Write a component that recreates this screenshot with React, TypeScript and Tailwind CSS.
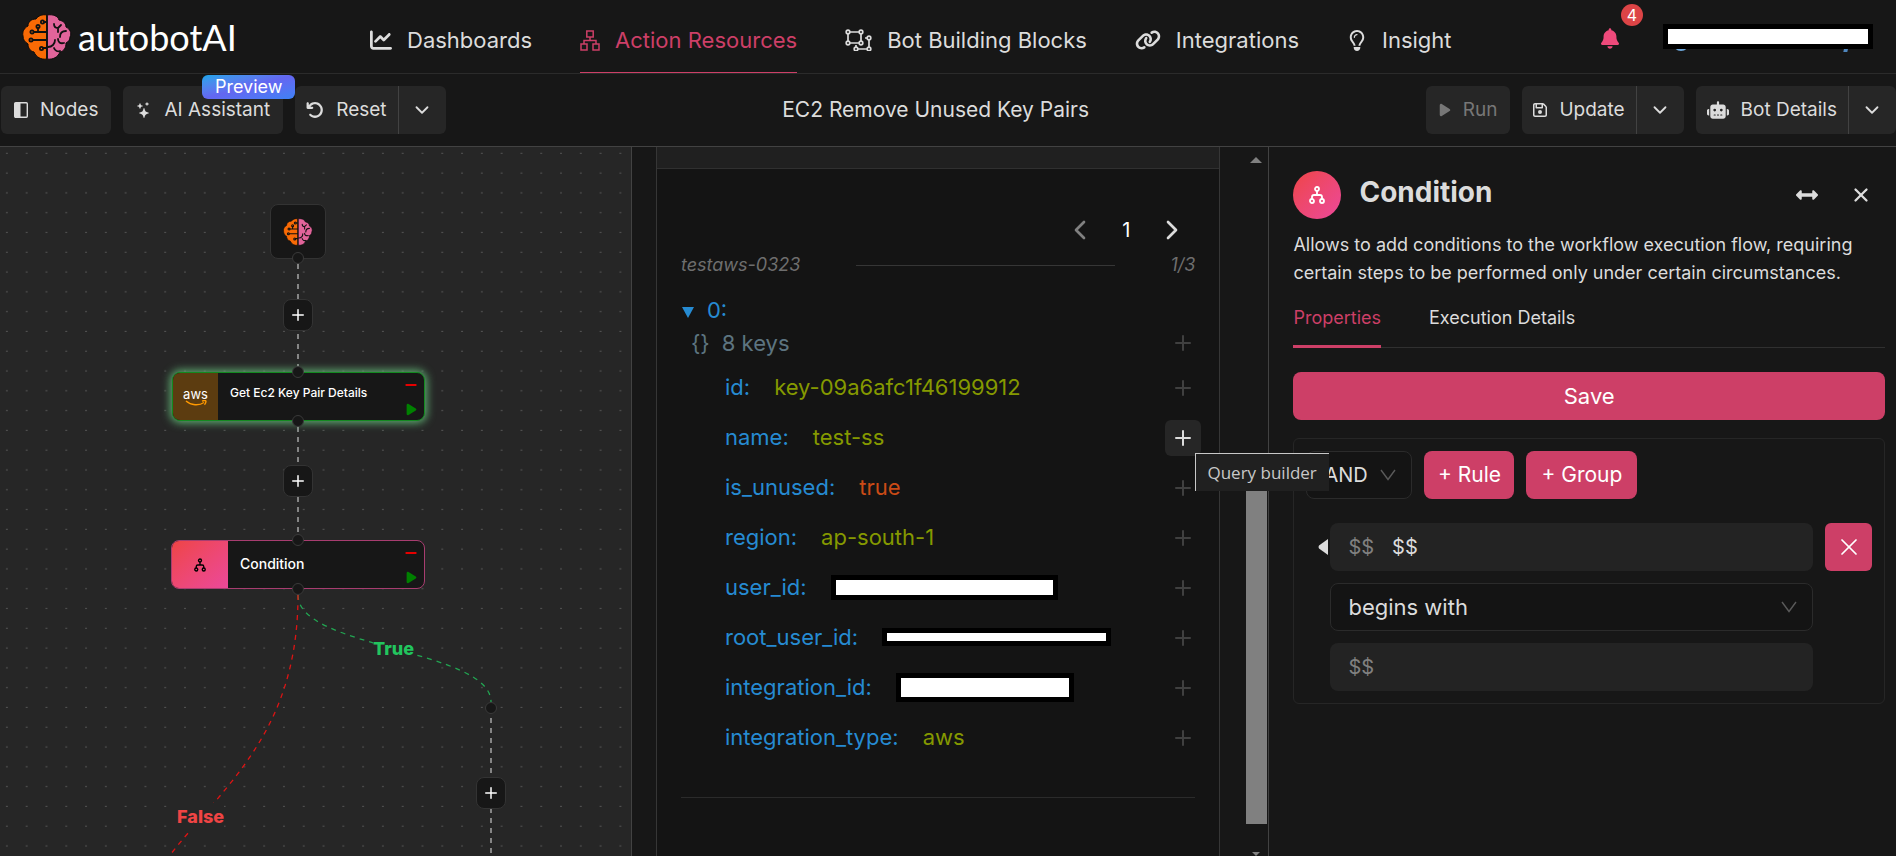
import type { ReactNode } from "react";
import { BsStars } from "react-icons/bs";
import {
  FaArrowRotateLeft,
  FaBell,
  FaChartLine,
  FaLink,
  FaPlay,
  FaRegFloppyDisk,
  FaRegLightbulb,
  FaRobot,
} from "react-icons/fa6";
import { FaArrowsAltH } from "react-icons/fa";
import { ChevronDown, ChevronLeft, ChevronRight, Minus, Plus, X } from "lucide-react";

function BrainLogo({ className }: { className: string }) {
  return (
    <svg viewBox="0 0 50 46" className={className} aria-hidden="true">
      <path
        d="M25 1C20 0 16 2 14 5C9 5 6 8 6 12C2 14 0 18 1 22C1 26 3 28 6 30C6 34 8 37 12 38C14 43 19 46 25 45Z"
        fill="#f96a05"
        stroke="#0b0b0b"
        strokeWidth="1"
      />
      <path
        d="M25 1C31 0 36 2 37 6C42 7 44 10 44 13C48 15 50 19 48 23C48 26 46 28 44 29C44 34 42 37 38 38C36 43 31 46 25 45Z"
        fill="#e1649a"
        stroke="#0b0b0b"
        strokeWidth="1"
      />
      <g fill="none" stroke="#111" strokeWidth="1.800" strokeLinecap="round">
        <path d="M25 2v42M25 8h-3M12 18h13M16 18v-4M11 26h14M25 34h-4" />
        <circle cx="20.500" cy="8" r="1.600" />
        <circle cx="16" cy="12.500" r="1.600" />
        <circle cx="10" cy="18" r="1.600" />
        <circle cx="9" cy="26" r="1.600" />
        <circle cx="19.500" cy="34.500" r="1.600" />
        <path d="M32 10c0 3 2 4 4 4M36 14l3-3M36 14v4M44 17c-5 0-6 3-6 6M26 33c4 0 7-3 7-7M42 29c-4 1-6-1-6-4M32 34c1 3 4 4 6 3" />
      </g>
    </svg>
  );
}

function SitemapIcon() {
  return (
    <svg viewBox="0 0 20 21" className="h-[21px] w-5" fill="none" stroke="currentColor" strokeWidth="1.500">
      <path d="M6.800 1h6.400v6H6.800zM1 14h6v6H1zM13 14h6v6h-6zM10 7v3.500M4 14v-3.500h12V14" />
    </svg>
  );
}

function BlocksIcon() {
  return (
    <svg viewBox="0 0 27 22" className="h-[22px] w-[27px]" fill="none" stroke="currentColor" strokeWidth="1.700">
      <path d="M5 3h9M5 14h9M3 5v7M16 5v7M20 9h2M24 11v7M13 20h9M11 16v2" />
      <circle cx="3" cy="3" r="1.800" />
      <circle cx="16" cy="3" r="1.800" />
      <circle cx="3" cy="14" r="1.800" />
      <circle cx="16" cy="14" r="1.800" />
      <circle cx="24" cy="9" r="1.800" />
      <circle cx="11" cy="20" r="1.800" />
      <circle cx="24" cy="20" r="1.800" />
    </svg>
  );
}

function ForkIcon({ className }: { className: string }) {
  return (
    <svg viewBox="0 0 16 18" className={className} fill="none" stroke="currentColor" strokeWidth="1.800">
      <circle cx="8" cy="3" r="2" />
      <circle cx="3" cy="15" r="2" />
      <circle cx="13" cy="15" r="2" />
      <path d="M8 5v4M3 13v-2a2 2 0 0 1 2-2h6a2 2 0 0 1 2 2v2" />
    </svg>
  );
}

function SidebarIcon() {
  return (
    <svg viewBox="0 0 14 16" className="h-4 w-3.5" aria-hidden="true">
      <rect x="0.700" y="0.700" width="12.600" height="14.600" rx="1" fill="none" stroke="currentColor" strokeWidth="1.400" />
      <path d="M1 1h5.500v14H1z" fill="currentColor" />
    </svg>
  );
}

function SelectArrow() {
  return (
    <svg
      viewBox="0 0 16 12"
      className="pointer-events-none absolute top-[18px] right-4 h-3 w-4"
      fill="none"
      stroke="#5a5a5a"
      strokeWidth="1.400"
      aria-hidden="true"
    >
      <path d="M1 1l7 9.500L15 1" />
    </svg>
  );
}

interface NavItem {
  label: string;
  icon: ReactNode;
  active?: boolean;
}

const navItems: NavItem[] = [
  { label: "Dashboards", icon: <FaChartLine className="h-[22px] w-[22px]" /> },
  { label: "Action Resources", icon: <SitemapIcon />, active: true },
  { label: "Bot Building Blocks", icon: <BlocksIcon /> },
  { label: "Integrations", icon: <FaLink className="h-[22px] w-[26px]" /> },
  { label: "Insight", icon: <FaRegLightbulb className="h-[21px] w-5" /> },
];

function Header() {
  return (
    <header className="flex h-[74px] shrink-0 items-stretch border-b border-[#2b2b2b] pl-[22px] pr-[23px]">
      <a href="#" className="flex w-[348px] shrink-0 items-center gap-1.5">
        <BrainLogo className="h-[46px] w-[50px]" />
        <span className="font-['Lato',sans-serif] text-4xl leading-8 text-white">autobotAI</span>
      </a>
      <nav className="flex items-stretch gap-12">
        {navItems.map((item) => (
          <a
            key={item.label}
            href="#"
            className={
              item.active
                ? "flex items-center gap-[15px] border-b border-[#cd3f67] pt-2 text-[22px] whitespace-nowrap text-[#cd3f67]"
                : "flex items-center gap-[15px] border-b border-transparent pt-2 text-[22px] whitespace-nowrap"
            }
          >
            {item.icon}
            {item.label}
          </a>
        ))}
      </nav>
      <div className="ml-auto flex items-center gap-11">
        <button type="button" aria-label="Notifications" className="relative mt-1 text-[#ef4a7b]">
          <FaBell className="h-[21px] w-[18px]" />
          <span className="absolute -top-6 left-5 flex h-[22px] w-[22px] items-center justify-center rounded-full bg-[#dc4446] text-base text-white">
            4
          </span>
        </button>
        <div className="relative h-[25px] w-[210px]">
          <span className="absolute -bottom-0.5 left-2.5 h-4 w-4 rounded-full bg-[#6ea8dc]" />
          <span className="absolute right-6 -bottom-[3px] h-4 w-1 -skew-x-12 bg-[#4f86bd]" />
          <div className="relative h-full border-5 border-black bg-white" />
        </div>
      </div>
    </header>
  );
}

function ToolButton({ icon, label, disabled }: { icon: ReactNode; label: string; disabled?: boolean }) {
  return (
    <button
      type="button"
      disabled={disabled}
      className="flex h-12 items-center gap-3 rounded-md bg-[#262626] px-[13px] text-[19px] whitespace-nowrap disabled:text-[#777]"
    >
      {icon}
      {label}
    </button>
  );
}

function SplitButton({ icon, label }: { icon: ReactNode; label: string }) {
  return (
    <div className="flex h-12 overflow-hidden rounded-md bg-[#262626]">
      <button
        type="button"
        className="flex items-center gap-3 border-r border-[#424242] px-[11px] text-[19px] whitespace-nowrap"
      >
        {icon}
        {label}
      </button>
      <button type="button" aria-label={`${label} options`} className="flex w-[47px] items-center justify-center">
        <ChevronDown size={22} />
      </button>
    </div>
  );
}

function Toolbar() {
  return (
    <div className="flex h-[73px] shrink-0 items-center justify-between border-b border-[#424242] pl-px">
      <div className="flex gap-3">
        <ToolButton icon={<SidebarIcon />} label="Nodes" />
        <div className="relative">
          <ToolButton icon={<BsStars className="h-4 w-4" />} label="AI Assistant" />
          <span className="absolute -top-[11px] -right-3 z-10 flex h-6 w-[93px] items-center justify-center rounded-md bg-linear-to-br from-[#0ea5e9] via-[#6366f1] to-[#3b82f6] text-lg text-white">
            Preview
          </span>
        </div>
        <SplitButton icon={<FaArrowRotateLeft className="h-[18px] w-[18px]" />} label="Reset" />
      </div>
      <h1 className="text-[21px]">EC2 Remove Unused Key Pairs</h1>
      <div className="flex gap-3">
        <ToolButton icon={<FaPlay className="h-3.5 w-3" />} label="Run" disabled />
        <SplitButton icon={<FaRegFloppyDisk className="h-4 w-3.5" />} label="Update" />
        <SplitButton icon={<FaRobot className="h-[18px] w-[22px]" />} label="Bot Details" />
      </div>
    </div>
  );
}

function AddNode({ className }: { className: string }) {
  return (
    <button
      type="button"
      aria-label="Add node"
      className={`absolute flex h-8 w-[30px] items-center justify-center rounded-lg border border-[#333] bg-[#171717] text-white ${className}`}
    >
      <Plus size={18} />
    </button>
  );
}

function Handle({ className }: { className: string }) {
  return <span className={`absolute h-3 w-3 rounded-full border border-[#3a3a3a] bg-[#171717] ${className}`} />;
}

function NodeActions() {
  return (
    <div className="ml-auto flex h-full flex-col items-center justify-between pt-1 pr-[5px] pb-1">
      <button type="button" aria-label="Remove" className="text-[#e60000]">
        <Minus size={16} strokeWidth={3} />
      </button>
      <button type="button" aria-label="Run step" className="text-[#008000]">
        <FaPlay size={13} />
      </button>
    </div>
  );
}

function Canvas() {
  return (
    <section className="relative w-1/3 shrink-0 overflow-hidden border-r border-[#424242] bg-[#262626]">
      <svg className="absolute inset-0 h-full w-full" fill="none" aria-hidden="true">
        <defs>
          <pattern id="dots" x="-3" y="-4" width="19.790" height="19.790" patternUnits="userSpaceOnUse">
            <circle cx="9.900" cy="10.200" r="0.650" fill="#7a7a7a" />
          </pattern>
        </defs>
        <rect width="100%" height="100%" fill="url(#dots)" />
        <g strokeDasharray="5 5" stroke="#858585" strokeWidth="2">
          <path d="M298 117V225M298 280V393M491 561V720" />
        </g>
        <g strokeDasharray="5 5" strokeWidth="1.300">
          <path d="M298 448C298 502 491 502 491 555" stroke="#22a552" />
          <path d="M298 448C298 670 106 670 106 891" stroke="#dd1414" />
        </g>
      </svg>

      <div className="absolute top-[57px] left-[270px] flex h-[55px] w-14 items-center justify-center rounded-lg border border-[#333] bg-[#171717]">
        <BrainLogo className="h-7 w-[30px]" />
      </div>

      <div className="absolute top-[225px] left-[172px] flex h-[49px] w-[253px] items-center overflow-hidden rounded-lg border border-[#138a20] bg-[#171717] shadow-[0_0_9px_2px_#5fae72]">
        <div className="flex h-full w-[45px] flex-col items-center justify-center bg-[#5c3c10]">
          <span className="text-[13px] leading-3 text-white">aws</span>
          <svg viewBox="0 0 22 6" className="h-1.5 w-[22px]" fill="none" stroke="#f90" strokeWidth="1.400">
            <path d="M1 1c5 4.500 13 5 18 1.500M17 1c2-.6 4-.6 4 .2s-.5 2.500-1.500 3.500" />
          </svg>
        </div>
        <span className="pb-2 pl-3 text-xs font-medium text-white">Get Ec2 Key Pair Details</span>
        <NodeActions />
      </div>

      <div className="absolute top-[393px] left-[171px] flex h-[49px] w-[254px] items-center overflow-hidden rounded-lg border border-[#a83d70] bg-[#171717]">
        <div className="flex h-full w-14 items-center justify-center bg-linear-to-br from-[#ef4444] to-[#ec4899] text-black">
          <ForkIcon className="h-3.5 w-3" />
        </div>
        <span className="pb-0.5 pl-3 text-sm font-medium text-white">Condition</span>
        <NodeActions />
      </div>

      <Handle className="top-[105px] left-[292px]" />
      <Handle className="top-[219px] left-[292px]" />
      <Handle className="top-[268px] left-[292px]" />
      <Handle className="top-[387px] left-[292px]" />
      <Handle className="top-[436px] left-[292px]" />
      <Handle className="top-[555px] left-[485px]" />
      <AddNode className="top-[152px] left-[283px]" />
      <AddNode className="top-[318px] left-[283px]" />
      <AddNode className="top-[630px] left-[476px]" />

      <span className="absolute top-[492px] left-[373px] bg-[#262626] text-lg leading-5 font-extrabold text-[#22c55e]">
        True
      </span>
      <span className="absolute top-[656px] left-[177px] bg-[#262626] py-1 text-lg leading-5 font-extrabold text-[#ef4444]">
        False
      </span>
    </section>
  );
}

function QueryButton({ hovered }: { hovered?: boolean }) {
  return (
    <div className="relative -mr-1.5 ml-auto shrink-0">
      <button
        type="button"
        aria-label="Query builder"
        className={
          hovered
            ? "flex h-9 w-9 items-center justify-center rounded-md bg-[#262626] text-[#dcdcdc]"
            : "flex h-9 w-9 items-center justify-center text-[#404040]"
        }
      >
        <Plus size={24} />
      </button>
      {hovered && (
        <div
          role="tooltip"
          className="absolute top-[33px] left-[30px] z-20 flex h-[38px] w-[134px] items-center border-t border-l border-[#c8c8c8] bg-[#202020] pl-[11px] font-['Open_Sans',sans-serif] text-[17px] whitespace-nowrap text-[#c8c8c8]"
        >
          Query builder
        </div>
      )}
    </div>
  );
}

interface Entry {
  name: string;
  value: ReactNode;
  hovered?: boolean;
}

const entries: Entry[] = [
  { name: "id", value: <span className="text-[#859900]">key-09a6afc1f46199912</span> },
  { name: "name", value: <span className="text-[#859900]">test-ss</span>, hovered: true },
  { name: "is_unused", value: <span className="text-[#cb4b16]">true</span> },
  { name: "region", value: <span className="text-[#859900]">ap-south-1</span> },
  { name: "user_id", value: <span className="h-[25px] w-[227px] border-5 border-black bg-white" /> },
  { name: "root_user_id", value: <span className="h-[18px] w-[229px] border-5 border-black bg-white" /> },
  { name: "integration_id", value: <span className="h-[29px] w-[178px] border-5 border-black bg-white" /> },
  { name: "integration_type", value: <span className="text-[#859900]">aws</span> },
];

function ResultPanel() {
  return (
    <section className="relative z-10 flex min-w-0 flex-1 pl-6">
      <div className="flex min-w-0 flex-1 flex-col border-x border-[#363636] bg-[#141414]">
        <div className="h-[22px] shrink-0 border-b border-[#303030] bg-[#202020]" />
        <div className="px-6 pt-[46px]">
          <div className="flex h-[30px] items-center justify-end">
            <button type="button" aria-label="Previous page" className="flex w-[46px] justify-center text-[#808080]">
              <ChevronLeft size={32} />
            </button>
            <span className="w-[46px] text-center text-xl text-white">1</span>
            <button type="button" aria-label="Next page" className="flex w-[46px] justify-center">
              <ChevronRight size={32} />
            </button>
          </div>
          <div className="flex h-10 items-center text-lg text-[#6e6e6e] italic">
            testaws-0323
            <hr className="mx-14 flex-1 border-[#363636]" />
            1/3
          </div>
          <div className="mt-2 flex h-[34px] items-center text-[22px] text-[#268bd2]">
            <svg viewBox="0 0 14 12" className="mt-1 h-3 w-3.5" fill="currentColor" aria-hidden="true">
              <path d="M1 1h12L7 12z" />
            </svg>
            <span className="pl-3">0:</span>
          </div>
          <div className="flex h-8 items-center pl-2.5 text-[22px] text-[#5d7480]">
            {"{}"}
            <span className="pl-3">8 keys</span>
            <QueryButton />
          </div>
          <div className="pt-1">
            {entries.map((entry) => (
              <div key={entry.name} className="flex h-[50px] items-center pl-11 text-[22px]">
                <span className="pr-6 pb-0.5 text-[#268bd2]">{entry.name}:</span>
                <span className="flex pb-0.5">{entry.value}</span>
                <QueryButton hovered={entry.hovered} />
              </div>
            ))}
          </div>
          <hr className="mt-[34px] border-[#2b2b2b]" />
        </div>
      </div>
      <div className="flex w-12 flex-col items-center pt-2.5 pl-6 text-[#808080]">
        <svg viewBox="0 0 12 6" className="h-1.5 w-3" fill="currentColor" aria-hidden="true">
          <path d="M0 6L6 0l6 6z" />
        </svg>
        <div className="mt-auto h-[354px] w-[21px] bg-[#808080]" />
        <svg viewBox="0 0 12 6" className="mt-7 h-1 w-3" fill="currentColor" aria-hidden="true">
          <path d="M0 0h12L6 6z" />
        </svg>
      </div>
    </section>
  );
}

function ConditionPanel() {
  return (
    <aside className="w-[33.1%] shrink-0 border-l border-[#424242] pr-[11px] pl-6">
      <div className="flex items-center pt-6">
        <div className="flex h-12 w-12 items-center justify-center rounded-full bg-linear-to-br from-[#ef4444] to-[#ec4899] text-white">
          <ForkIcon className="h-[18px] w-4" />
        </div>
        <h2 className="pb-1.5 pl-[18px] text-[28px] leading-9 font-bold">Condition</h2>
        <button type="button" aria-label="Resize panel" className="ml-auto">
          <FaArrowsAltH size={22} />
        </button>
        <button type="button" aria-label="Close panel" className="mr-[13px] ml-8">
          <X size={22} strokeWidth={2.5} />
        </button>
      </div>
      <p className="pt-3 text-lg leading-7">
        Allows to add conditions to the workflow execution flow, requiring certain steps to be performed only under
        certain circumstances.
      </p>
      <div role="tablist" className="flex gap-12 border-b border-[#303030] text-lg">
        <button
          type="button"
          role="tab"
          aria-selected="true"
          className="-mb-px h-[61px] border-b-3 border-[#cd3f67] pt-1 text-[#cd3f67]"
        >
          Properties
        </button>
        <button
          type="button"
          role="tab"
          aria-selected="false"
          className="-mb-px h-[61px] border-b-3 border-transparent pt-1"
        >
          Execution Details
        </button>
      </div>
      <button type="button" className="mt-6 h-12 w-full rounded-lg bg-[#cd3f67] text-[22px] text-white">
        Save
      </button>

      <form className="mt-[18px] rounded-md border border-[#262626] px-3 pt-3 pb-3 text-xl">
        <div className="flex gap-3">
          <div className="relative">
            <select
              aria-label="Combinator"
              className="h-12 w-[106px] appearance-none rounded-lg border border-[#2b2b2b] bg-[#141414] pl-[17px]"
            >
              <option>AND</option>
              <option>OR</option>
            </select>
            <SelectArrow />
          </div>
          <button type="button" className="h-12 w-[90px] rounded-lg bg-[#cd3f67] text-[21px] text-white">
            + Rule
          </button>
          <button type="button" className="h-12 w-[111px] rounded-lg bg-[#cd3f67] text-[21px] text-white">
            + Group
          </button>
        </div>
        <div className="flex gap-3 pt-6">
          <div className="flex h-12 items-center pl-3">
            <svg viewBox="0 0 10 18" className="-mr-2.5 h-[18px] w-2.5" fill="currentColor" aria-hidden="true">
              <path d="M10 1v16L1 10.500q-1-1.500 0-3z" />
            </svg>
          </div>
          <div className="flex flex-1 flex-col gap-3">
            <label className="flex h-12 items-center gap-[18px] rounded-lg bg-[#232323] px-[18px]">
              <span className="text-[#808080]">$$</span>
              <input aria-label="Field" defaultValue="$$" className="min-w-0 flex-1 bg-transparent outline-none" />
            </label>
            <div className="relative">
              <select
                aria-label="Operator"
                className="h-12 w-full appearance-none rounded-lg border border-[#2b2b2b] bg-[#141414] pl-[17px] text-[22px]"
              >
                <option>begins with</option>
                <option>ends with</option>
              </select>
              <SelectArrow />
            </div>
            <label className="flex h-12 items-center gap-[18px] rounded-lg bg-[#232323] px-[18px]">
              <span className="text-[#808080]">$$</span>
              <input aria-label="Value" className="min-w-0 flex-1 bg-transparent outline-none" />
            </label>
          </div>
          <button
            type="button"
            aria-label="Delete rule"
            className="flex h-12 w-[47px] items-center justify-center rounded-md bg-[#cd3f67] text-white"
          >
            <X size={28} strokeWidth={1.5} />
          </button>
        </div>
      </form>
    </aside>
  );
}

export default function App() {
  return (
    <div className="flex h-screen flex-col overflow-hidden bg-[#171717] font-['Inter',sans-serif] text-[#dcdcdc]">
      <Header />
      <Toolbar />
      <main className="flex min-h-0 flex-1">
        <Canvas />
        <ResultPanel />
        <ConditionPanel />
      </main>
    </div>
  );
}
